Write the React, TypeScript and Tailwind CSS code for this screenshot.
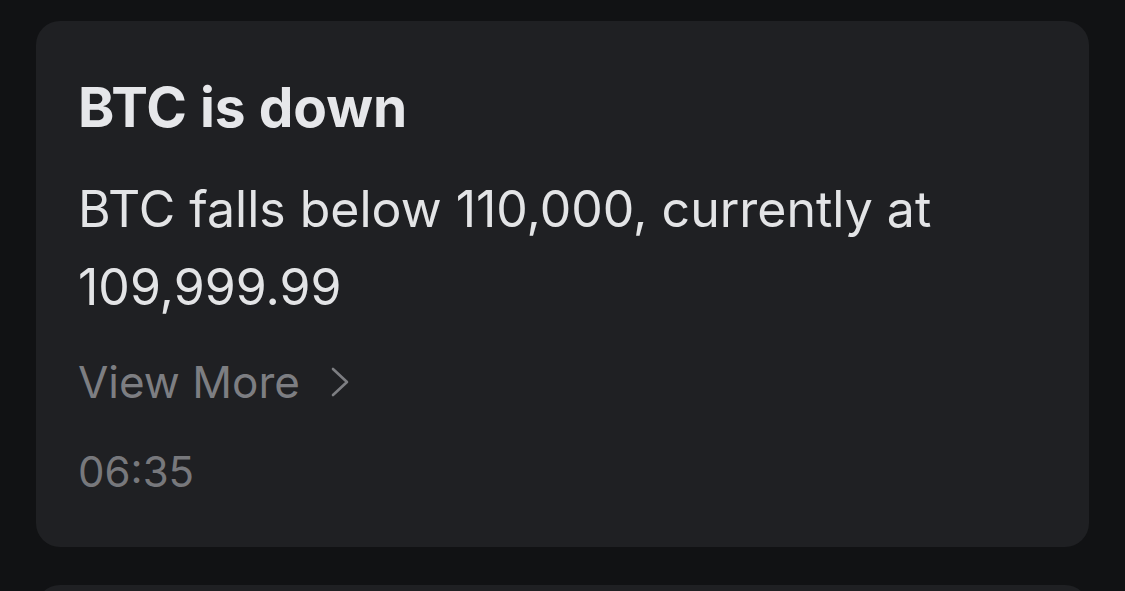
import React from 'react';

type Alert = {
  title: string;
  body: string;
  time: string;
};

const alerts: Alert[] = [
  {
    title: 'BTC is down',
    body: 'BTC falls below 110,000, currently at 109,999.99',
    time: '06:35',
  },
  {
    title: 'ETH is up',
    body: 'ETH rises above 4,000, currently at 4,000.01',
    time: '06:12',
  },
];

function Chevron() {
  return (
    <svg width="20" height="30" viewBox="0 0 20 30" fill="none" className="ml-[30px]">
      <polyline points="3,2 17,15 3,28" stroke="#7d7e82" strokeWidth="2.6" strokeLinecap="round" strokeLinejoin="round" />
    </svg>
  );
}

function AlertCard({ alert }: { alert: Alert }) {
  return (
    <div className="rounded-[24px] bg-[#1f2023] pl-[42px] pr-[60px] pt-[51px] pb-[47px]">
      <div className="text-[55px] leading-[70px] font-bold text-[#e6e7ea]">{alert.title}</div>
      <div className="mt-[28px] text-[50px] leading-[78px] text-[#e3e4e6]">{alert.body}</div>
      <div className="mt-[26px] flex items-center text-[44px] leading-[60px] text-[#7d7e82]">
        <span>View More</span>
        <Chevron />
      </div>
      <div className="mt-[32px] text-[42px] leading-[56px] text-[#77787c]">{alert.time}</div>
    </div>
  );
}

export default function App() {
  return (
    <div
      className="min-h-screen bg-[#111214] px-[36px] pt-[21px] flex flex-col gap-[38px]"
      style={{ fontFamily: 'Inter, "Noto Sans", sans-serif' }}
    >
      {alerts.map((a, i) => (
        <AlertCard key={i} alert={a} />
      ))}
    </div>
  );
}
